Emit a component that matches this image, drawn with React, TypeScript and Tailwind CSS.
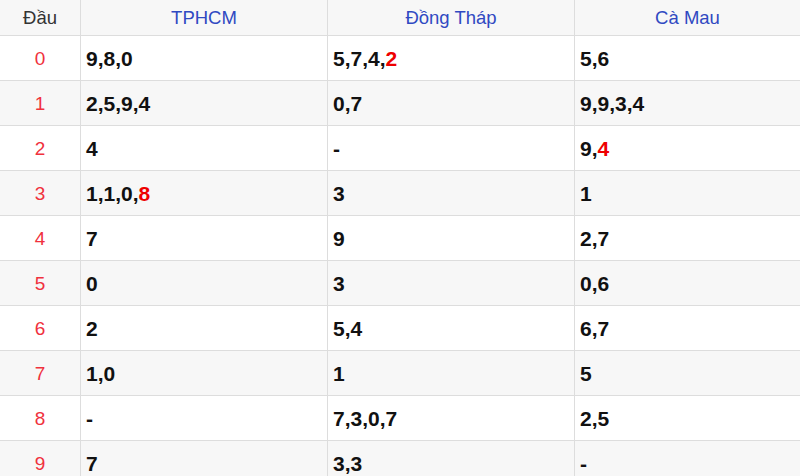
import React from "react";

type Part = { t: string; hot?: boolean };

const rows: Part[][][] = [
  [[{ t: "9,8,0" }], [{ t: "5,7,4," }, { t: "2", hot: true }], [{ t: "5,6" }]],
  [[{ t: "2,5,9,4" }], [{ t: "0,7" }], [{ t: "9,9,3,4" }]],
  [[{ t: "4" }], [{ t: "-" }], [{ t: "9," }, { t: "4", hot: true }]],
  [[{ t: "1,1,0," }, { t: "8", hot: true }], [{ t: "3" }], [{ t: "1" }]],
  [[{ t: "7" }], [{ t: "9" }], [{ t: "2,7" }]],
  [[{ t: "0" }], [{ t: "3" }], [{ t: "0,6" }]],
  [[{ t: "2" }], [{ t: "5,4" }], [{ t: "6,7" }]],
  [[{ t: "1,0" }], [{ t: "1" }], [{ t: "5" }]],
  [[{ t: "-" }], [{ t: "7,3,0,7" }], [{ t: "2,5" }]],
  [[{ t: "7" }], [{ t: "3,3" }], [{ t: "-" }]],
];

const heads = ["TPHCM", "Đồng Tháp", "Cà Mau"];

const App: React.FC = () => {
  return (
    <main className="w-[800px] h-[476px] overflow-hidden bg-white font-['Liberation_Sans',Arial,sans-serif]">
      <div className="grid grid-cols-[81px_247px_247px_225px]">
        <div className="h-[36px] flex items-center justify-center bg-[#f7f7f7] border-r border-b border-[#dddddd] text-[18.5px] text-[#333333]">
          Đầu
        </div>
        {heads.map((h, i) => (
          <div
            key={h}
            className={`h-[36px] flex items-center justify-center bg-[#f7f7f7] border-b border-[#dddddd] text-[18.5px] text-[#3049c2] ${
              i < 2 ? "border-r" : ""
            }`}
          >
            {h}
          </div>
        ))}

        {rows.map((row, r) => {
          const bg = r % 2 === 1 ? "bg-[#f7f7f7]" : "bg-white";
          return (
            <React.Fragment key={r}>
              <div
                className={`h-[45px] flex items-center justify-center pt-[2px] border-r border-b border-[#dddddd] text-[19px] text-[#f0313d] ${bg}`}
              >
                {r}
              </div>
              {row.map((cell, c) => (
                <div
                  key={c}
                  className={`h-[45px] flex items-center pl-[5px] pt-[2px] border-b border-[#dddddd] text-[21px] font-bold text-[#111111] ${bg} ${
                    c < 2 ? "border-r" : ""
                  }`}
                >
                  {cell.map((p, k) => (
                    <span key={k} className={p.hot ? "text-[#ee0000]" : ""}>
                      {p.t}
                    </span>
                  ))}
                </div>
              ))}
            </React.Fragment>
          );
        })}
      </div>
    </main>
  );
};

export default App;
